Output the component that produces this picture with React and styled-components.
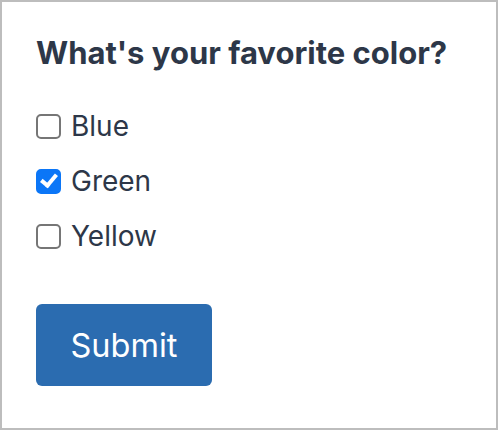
import React, { useState } from "react";
import styled, { createGlobalStyle } from "styled-components";

const Global = createGlobalStyle`
  html, body { margin: 0; padding: 0; background: #fff; }
  body { font-family: Inter, "Noto Sans", sans-serif; }
`;

const Frame = styled.div`
  box-sizing: border-box;
  width: 498px;
  height: 430px;
  border: 2px solid #bdbdbd;
  padding: 33px 34px 0;
  display: flex;
  flex-direction: column;
  color: #2d3748;
`;

const Heading = styled.h2`
  margin: 0;
  font-size: 31px;
  line-height: 36px;
  font-weight: 700;
  color: #2d3748;
  white-space: nowrap;
`;

const Options = styled.div`
  display: flex;
  flex-direction: column;
  gap: 21px;
  margin-top: 38px;
`;

const Row = styled.label`
  display: flex;
  align-items: center;
  gap: 10px;
  height: 34px;
  font-size: 28px;
  line-height: 34px;
  cursor: pointer;
`;

const Box = styled.input.attrs({ type: "checkbox" })`
  appearance: none;
  -webkit-appearance: none;
  margin: 0;
  box-sizing: border-box;
  width: 25px;
  height: 25px;
  border: 2px solid #767676;
  border-radius: 5px;
  background: #fff;
  display: grid;
  place-items: center;
  cursor: pointer;
  &:checked {
    background: #0b76f7;
    border-color: #0b76f7;
  }
  &:checked::after {
    content: "";
    width: 6px;
    height: 12px;
    border: solid #fff;
    border-width: 0 4px 4px 0;
    transform: translate(0, -2px) rotate(40deg);
  }
`;

const Button = styled.button`
  margin-top: 51px;
  align-self: flex-start;
  width: 176px;
  height: 82px;
  border: none;
  border-radius: 6px;
  background: #2b6cb0;
  color: #fff;
  font-family: Inter, "Noto Sans", sans-serif;
  font-size: 32.5px;
  font-weight: 400;
  cursor: pointer;
`;

const colors = ["Blue", "Green", "Yellow"];

export default function App() {
  const [checked, setChecked] = useState({ Green: true });
  return (
    <>
      <Global />
      <Frame>
        <Heading>What's your favorite color?</Heading>
        <Options>
          {colors.map((c) => (
            <Row key={c}>
              <Box
                checked={!!checked[c]}
                onChange={() => setChecked((s) => ({ ...s, [c]: !s[c] }))}
              />
              {c}
            </Row>
          ))}
        </Options>
        <Button type="button">Submit</Button>
      </Frame>
    </>
  );
}
